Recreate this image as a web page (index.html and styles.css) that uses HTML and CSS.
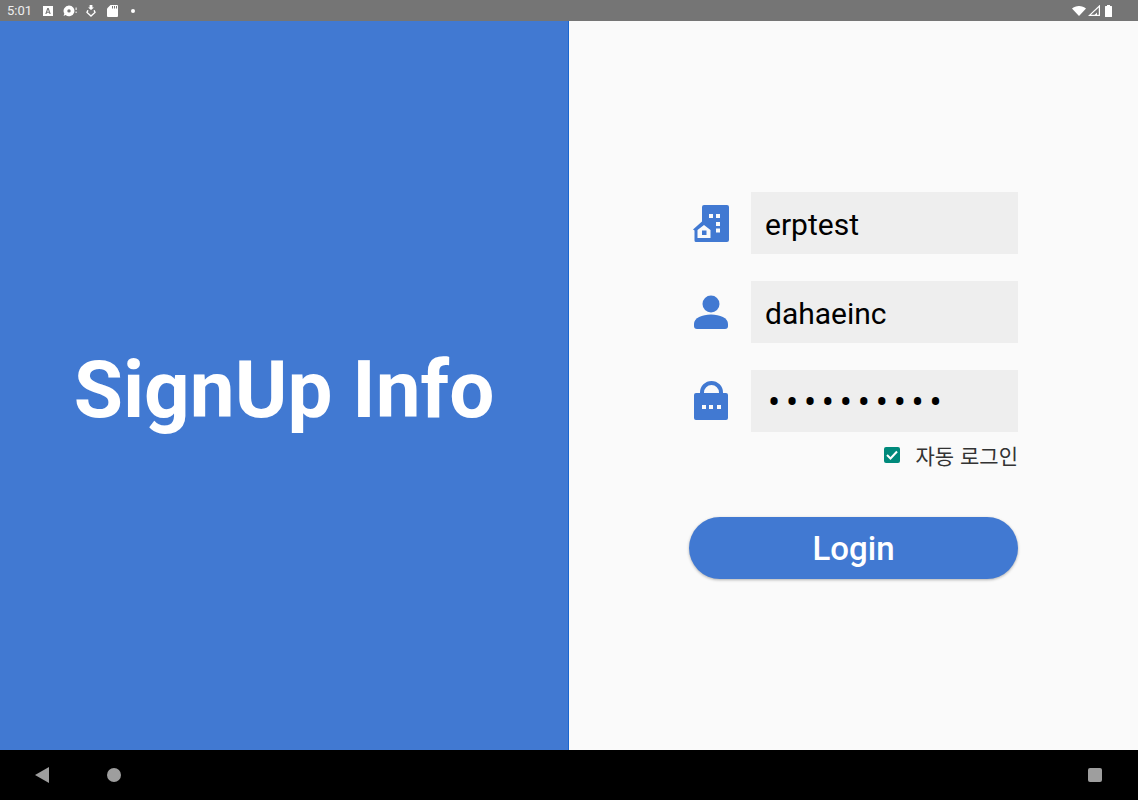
FILE: index.html
```html
<!DOCTYPE html>
<html lang="ko">
<head>
    <meta charset="UTF-8">
    <meta name="viewport" content="width=device-width, initial-scale=1.0">
    <title>SignUp Info</title>
    <link rel="stylesheet" href="styles.css">
</head>
<body>
    <div class="status-bar">
        <div class="status-left">
            <span class="clock">5:01</span>
            <svg class="note-a" width="10" height="10" viewBox="0 0 10 10"><path fill="#fff" d="M0 0h10v10H0z"/><path fill="#757575" d="M4.300 2h1.400l2 6H6.500l-.4-1.300H3.900L3.500 8H2.300zm-.1 3.800h1.600L5 3.400z"/></svg>
            <svg class="note-disc" width="14" height="12" viewBox="0 0 14 12"><path fill="#fff" fill-rule="evenodd" d="M6 .5a5.400 5.400 0 1 1-3.400 9.600L.6 11l.7-2.400A5.400 5.400 0 0 1 6 .5zm0 3.700a1.700 1.700 0 1 0 0 3.400 1.700 1.700 0 0 0 0-3.400z"/><path fill="#fff" d="M12.600 2.500h1v2.600h-1zM12.600 6.500h1v1.600h-1z"/></svg>
            <svg class="note-down" width="10" height="12" viewBox="0 0 10 12"><path fill="#fff" d="M3.600 0h2.800v2.400H8L5 5 2 2.400h1.600z"/><path fill="none" stroke="#fff" stroke-width="1.400" d="M1.900 5.200 1 7.400 5 11l4-3.600-.9-2.200"/></svg>
            <svg class="note-card" width="11" height="12" viewBox="0 0 11 12"><path fill="#fff" d="M3.500 0H10a1 1 0 0 1 1 1v10a1 1 0 0 1-1 1H1a1 1 0 0 1-1-1V3.500z"/><path fill="#757575" d="M5 1h1v2.400H5zM7 1h1v2.400H7zM9 1h1v2.400H9z"/></svg>
            <span class="note-dot"></span>
        </div>
        <div class="status-right">
            <svg width="14" height="10" viewBox="0 0 14 10"><path fill="#fff" d="M0 2.500C1.800.9 4.200 0 7 0s5.200.9 7 2.500L7 10z"/></svg>
            <svg width="12" height="11" viewBox="0 0 12 11"><path fill="none" stroke="#fff" stroke-width="1.200" d="M1.500 10.400 11.400 1v9.400z"/><path fill="#fff" d="M6 10.400 9 7.500v2.900z"/></svg>
            <svg class="battery" width="7" height="12" viewBox="0 0 7 12"><path fill="#fff" d="M2 0h3v1h1.500a.5.5 0 0 1 .5.500V11.500a.5.5 0 0 1-.5.500H.5a.5.5 0 0 1-.5-.500V1.500A.5.5 0 0 1 .5 1H2z"/></svg>
        </div>
    </div>

    <div class="main">
        <div class="left-panel">
            <h1>SignUp Info</h1>
        </div>

        <div class="right-panel">
            <form class="login-form">
                <div class="form-row">
                    <svg class="field-icon" width="36" height="38" viewBox="0 0 36 38">
                        <path fill="#4179d2" fill-rule="evenodd" d="M9 3a2 2 0 0 1 2-2h23a2 2 0 0 1 2 2v33a2 2 0 0 1-2 2H3A1.500 1.500 0 0 1 1.500 36.500V26.500L0 25.500l9-8zM16 10v4h4v-4zM23 10v4h4v-4zM23 18v4h4v-4zM23 24.500v4h4v-4zM11 21l-6.500 5v8h13v-8z"/>
                        <path fill="#4179d2" d="M9 26.500h4.500V31H9z"/>
                    </svg>
                    <input class="field" type="text" value="erptest">
                </div>
                <div class="form-row">
                    <svg class="field-icon" width="36" height="36" viewBox="0 0 36 36">
                        <circle cx="18" cy="10" r="8.500" fill="#4179d2"/>
                        <path fill="#4179d2" d="M1 30c0-6 8-9.500 17-9.500S35 24 35 30v2a3 3 0 0 1-3 3H4a3 3 0 0 1-3-3z"/>
                    </svg>
                    <input class="field" type="text" value="dahaeinc">
                </div>
                <div class="form-row">
                    <svg class="field-icon" width="36" height="40" viewBox="0 0 36 40">
                        <path fill="none" stroke="#4179d2" stroke-width="4" d="M9 14v-2.500a9.500 9.500 0 0 1 19 0V14"/>
                        <path fill="#4179d2" fill-rule="evenodd" d="M3 12h30a2 2 0 0 1 2 2v23a2 2 0 0 1-2 2H3a2 2 0 0 1-2-2V14a2 2 0 0 1 2-2zM9 24v4h4v-4zM16 24v4h4v-4zM24 24v4h4v-4z"/>
                    </svg>
                    <input class="field field-password" type="password" value="dahaeinc12">
                </div>
                <div class="auto-login">
                    <span class="check-box">
                        <svg width="12" height="10" viewBox="0 0 12 10"><path fill="none" stroke="#fff" stroke-width="2" d="M1 5l3.500 3.500L11 1.500"/></svg>
                    </span>
                    <label>자동 로그인</label>
                </div>
                <button type="button" class="login-btn">Login</button>
            </form>
        </div>
    </div>

    <div class="nav-bar">
        <div class="nav-left">
            <svg width="14" height="16" viewBox="0 0 14 16"><path fill="#9e9e9e" d="M14 0v16L0 8z"/></svg>
            <span class="nav-home"></span>
        </div>
        <span class="nav-recent"></span>
    </div>
</body>
</html>
```

FILE: styles.css
```css
* {
    box-sizing: border-box;
    margin: 0;
    padding: 0;
}

body {
    width: 1138px;
    height: 800px;
    display: flex;
    flex-direction: column;
    overflow: hidden;
    font-family: Roboto, 'Noto Sans CJK KR', sans-serif;
    background-color: #fafafa;
}

.status-bar {
    height: 21px;
    flex-shrink: 0;
    display: flex;
    align-items: center;
    justify-content: space-between;
    padding: 0 26px 0 7px;
    background-color: #757575;
}

.status-left,
.status-right {
    display: flex;
    align-items: center;
}

.status-right {
    gap: 2px;
}

.battery {
    margin-left: 3px;
}

.clock {
    width: 36px;
    color: #eee;
    font-size: 13px;
}

.note-disc {
    margin-left: 10px;
}

.note-down {
    margin-left: 9px;
}

.note-card {
    margin-left: 11px;
}

.note-dot {
    width: 4px;
    height: 4px;
    margin-left: 13px;
    border-radius: 50%;
    background-color: #fff;
}

.main {
    flex: 1;
    display: flex;
    min-height: 0;
}

.left-panel {
    width: 569px;
    display: flex;
    align-items: center;
    justify-content: center;
    padding-top: 9px;
    background-color: #4179d2;
    border-right: 1px solid #1a66d0;
}

h1 {
    color: white;
    font-size: 80px;
    font-weight: 700;
    white-space: nowrap;
}

.right-panel {
    flex: 1;
    display: flex;
    align-items: center;
    justify-content: center;
}

.login-form {
    width: 329px;
    display: flex;
    flex-direction: column;
}

.form-row {
    display: flex;
    align-items: center;
    justify-content: space-between;
    margin-bottom: 27px;
}

.form-row:nth-child(3) {
    margin-bottom: 0;
}

.field-icon {
    margin-left: 4px;
}

.field {
    width: 267px;
    height: 62px;
    padding: 3px 13px 0 14px;
    border: none;
    outline: none;
    color: #000;
    background-color: #eee;
    font-family: Roboto, sans-serif;
    font-size: 30px;
}

.field-password {
    padding: 3px 0 0 17px;
    letter-spacing: 5.800px;
    font-size: 36px;
}

.auto-login {
    display: flex;
    align-items: center;
    justify-content: flex-end;
    gap: 16px;
    height: 46px;
    color: #333;
    font-family: 'Noto Sans CJK KR', sans-serif;
    font-size: 21px;
}

.check-box {
    width: 16px;
    height: 16px;
    display: flex;
    align-items: center;
    justify-content: center;
    border-radius: 2px;
    background-color: #00897b;
}

.login-btn {
    height: 62px;
    margin-top: 39px;
    border: none;
    border-radius: 31px;
    color: white;
    background-color: #4179d2;
    box-shadow: 0 1px 3px rgba(0, 0, 0, 0.3);
    font-family: Roboto, sans-serif;
    font-size: 33px;
    font-weight: 500;
}

.nav-bar {
    height: 50px;
    flex-shrink: 0;
    display: flex;
    align-items: center;
    justify-content: space-between;
    padding: 0 36px 0 35px;
    background-color: #000;
}

.nav-left {
    display: flex;
    align-items: center;
    gap: 58px;
}

.nav-home {
    width: 14px;
    height: 14px;
    border-radius: 50%;
    background-color: #9e9e9e;
}

.nav-recent {
    width: 14px;
    height: 14px;
    border-radius: 2px;
    background-color: #9e9e9e;
}
```
